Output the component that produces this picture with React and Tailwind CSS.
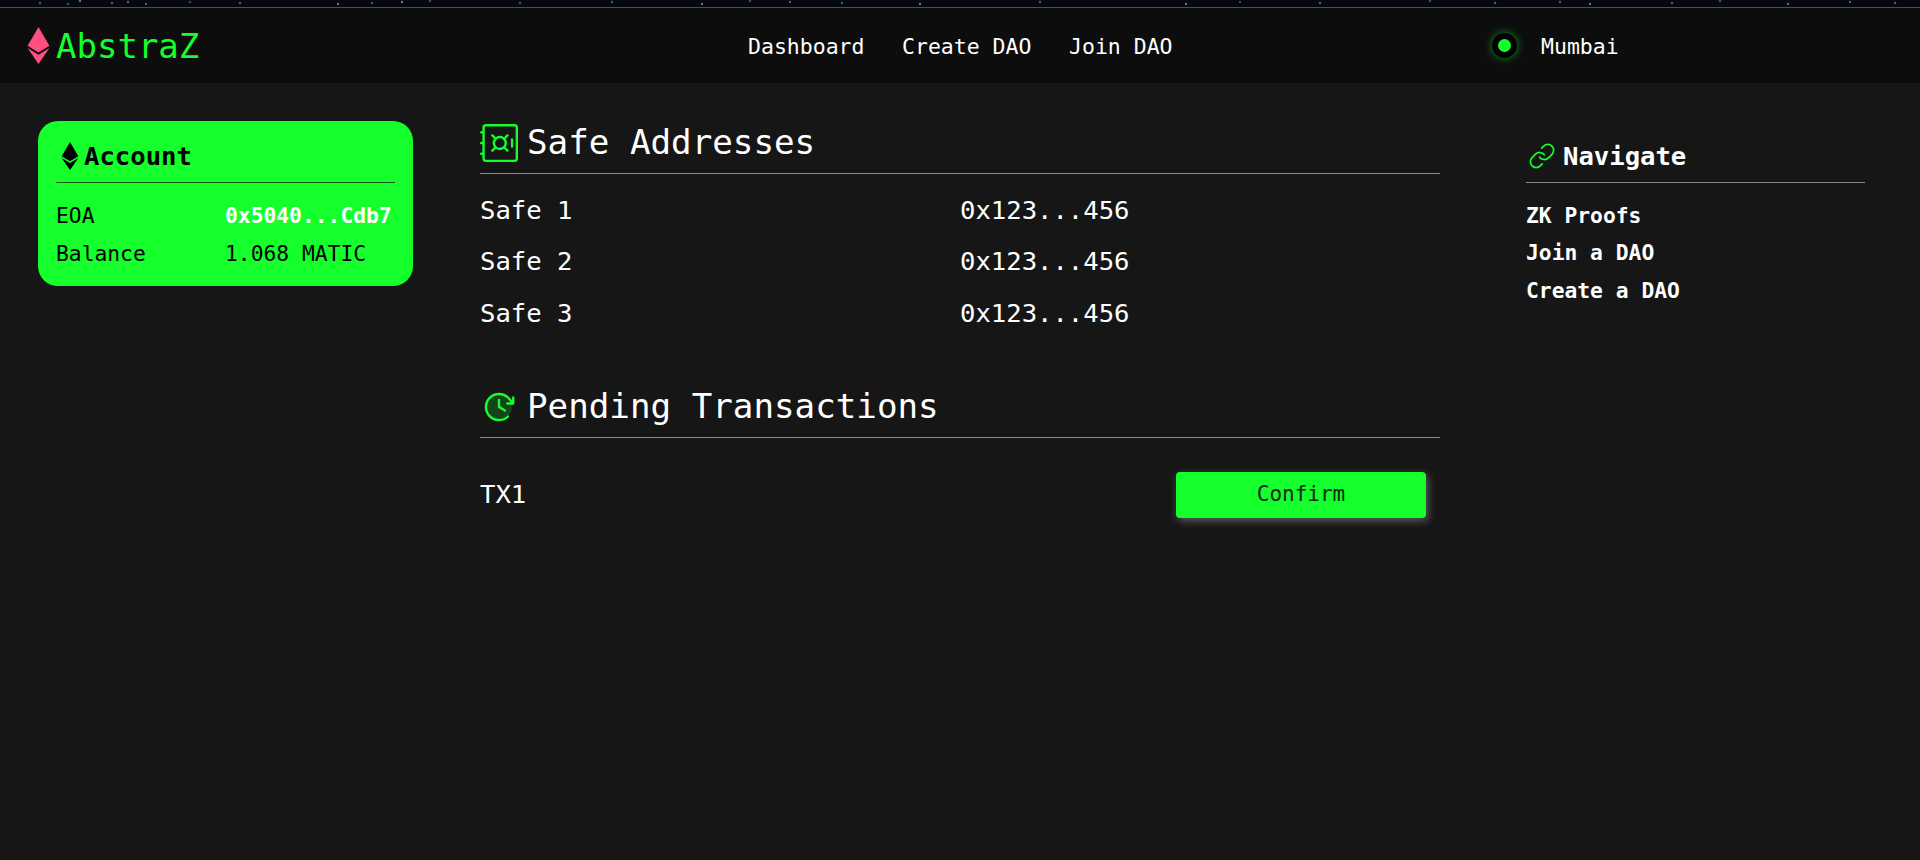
import React from "react";
import { FaEthereum } from "react-icons/fa";
import { BsSafe } from "react-icons/bs";
import { PiClockClockwiseDuotone } from "react-icons/pi";
import { Link } from "lucide-react";

const stars = [
  [40, 3, "#8aa"], [68, 4, "#59a"], [80, 1, "#cdd"], [112, 3, "#9ab"], [128, 2, "#abc"], [146, 4, "#8ab"],
  [190, 2, "#68a"], [240, 3, "#9ab"], [338, 4, "#bcc"], [372, 3, "#89a"], [402, 2, "#cde"], [430, 1, "#79a"],
  [520, 3, "#89a"], [612, 2, "#7ab"], [702, 4, "#bcd"], [750, 1, "#79a"], [790, 2, "#9ab"], [842, 3, "#7ab"],
  [920, 4, "#cde"], [1040, 2, "#8ab"], [1186, 4, "#bcd"], [1240, 2, "#68a"], [1320, 3, "#abc"], [1430, 1, "#79a"],
  [1495, 3, "#8ab"], [1560, 2, "#9ab"], [1590, 4, "#bcd"], [1672, 3, "#9ab"], [1720, 1, "#89a"], [1788, 4, "#abc"],
  [1850, 2, "#8ab"], [1895, 3, "#9ab"],
];

function Starfield() {
  return (
    <svg className="block w-full h-[7px] bg-[#05080c]" viewBox="0 0 1920 7" preserveAspectRatio="none">
      {stars.map(([x, y, c]) => (
        <circle key={x} cx={x} cy={y} r="1.2" fill={c} opacity="0.55" />
      ))}
    </svg>
  );
}

function NavBar() {
  return (
    <nav className="flex items-center h-[76px] bg-[#0d0d0d] border-t border-[#4a4f55] text-white">
      <div className="w-[748px] pl-[27px] flex items-center gap-[6px]">
        <FaEthereum className="w-[23px] h-[37px] text-[#ff4f7e]" />
        <span className="text-[34px] text-[#14ff2b] pt-[1px]">AbstraZ</span>
      </div>
      <div className="flex items-center text-[21.5px] pt-[3px]">
        <a className="w-[154px]">Dashboard</a>
        <a className="w-[167px]">Create DAO</a>
        <a className="w-[155px]">Join DAO</a>
      </div>
      <div className="ml-[268px] flex items-center gap-[24px]">
        <span className="flex items-center justify-center w-[25px] h-[25px] rounded-full bg-black shadow-[0_0_8px_rgba(20,255,43,0.55)]">
          <span className="w-[13px] h-[13px] rounded-full bg-[#14ff2b]" />
        </span>
        <span className="text-[21.5px] pt-[3px]">Mumbai</span>
      </div>
    </nav>
  );
}

function SideCard({ icon, title, green, children }) {
  return (
    <div className={`w-[375px] h-[165px] rounded-[20px] px-[18px] pt-[16px] ${green ? "bg-[#14ff2b] text-black" : "text-white"}`}>
      <div className={`flex items-center gap-[5px] h-[46px] pb-[7px] pl-[5px] border-b ${green ? "border-[#0c5c14]" : "border-[#8a8a8a]"}`}>
        {icon}
        <span className="text-[25.6px] font-semibold">{title}</span>
      </div>
      <div className="pt-[14px] text-[21.3px]">{children}</div>
    </div>
  );
}

function Heading({ icon, children }) {
  return (
    <div className="flex items-center gap-[9px] h-[53px] pb-[8px] border-b border-[#8a8a8a] text-[34.2px] text-white">
      {icon}
      <span>{children}</span>
    </div>
  );
}

export default function App() {
  return (
    <div className="min-h-[860px] bg-[#161616] font-['DejaVu_Sans_Mono',monospace]">
      <Starfield />
      <NavBar />
      <main className="flex pt-[38px]">
        <div className="w-[480px] pl-[38px]">
          <SideCard green title="Account" icon={<FaEthereum className="w-[18px] h-[28px] text-black" />}>
            <div className="grid grid-cols-[169px_1fr] h-[38px] items-center">
              <span>EOA</span>
              <span className="text-white font-bold">0x5040...Cdb7</span>
            </div>
            <div className="grid grid-cols-[169px_1fr] h-[38px] items-center">
              <span>Balance</span>
              <span>1.068 MATIC</span>
            </div>
          </SideCard>
        </div>

        <div className="w-[960px] text-[25.6px] text-white">
          <Heading icon={<BsSafe className="w-[38px] h-[38px] text-[#14ff2b]" />}>Safe Addresses</Heading>
          <div className="pt-[10px]">
            {["Safe 1", "Safe 2", "Safe 3"].map((name) => (
              <div key={name} className="grid grid-cols-2 h-[51.5px] items-center">
                <span>{name}</span>
                <span>0x123...456</span>
              </div>
            ))}
          </div>

          <div className="mt-[46px]">
            <Heading icon={<PiClockClockwiseDuotone className="w-[38px] h-[38px] text-[#14ff2b]" />}>Pending Transactions</Heading>
          </div>
          <div className="flex items-center justify-between pt-[34px] pr-[14px]">
            <span>TX1</span>
            <button className="w-[250px] h-[46px] pt-[1px] rounded-[4px] bg-[#14ff2b] text-[21px] text-[#0a2a0e] shadow-[2px_3px_8px_rgba(255,255,255,0.3)]">
              Confirm
            </button>
          </div>
        </div>

        <div className="w-[480px] pl-[68px]">
          <SideCard title="Navigate" icon={<Link strokeWidth={1.5} className="w-[28px] h-[28px] -ml-[3px] mr-[2px] text-[#14ff2b]" />}>
            <div className="font-bold">
              <div className="h-[37.5px] flex items-center">ZK Proofs</div>
              <div className="h-[37.5px] flex items-center">Join a DAO</div>
              <div className="h-[37.5px] flex items-center">Create a DAO</div>
            </div>
          </SideCard>
        </div>
      </main>
    </div>
  );
}
